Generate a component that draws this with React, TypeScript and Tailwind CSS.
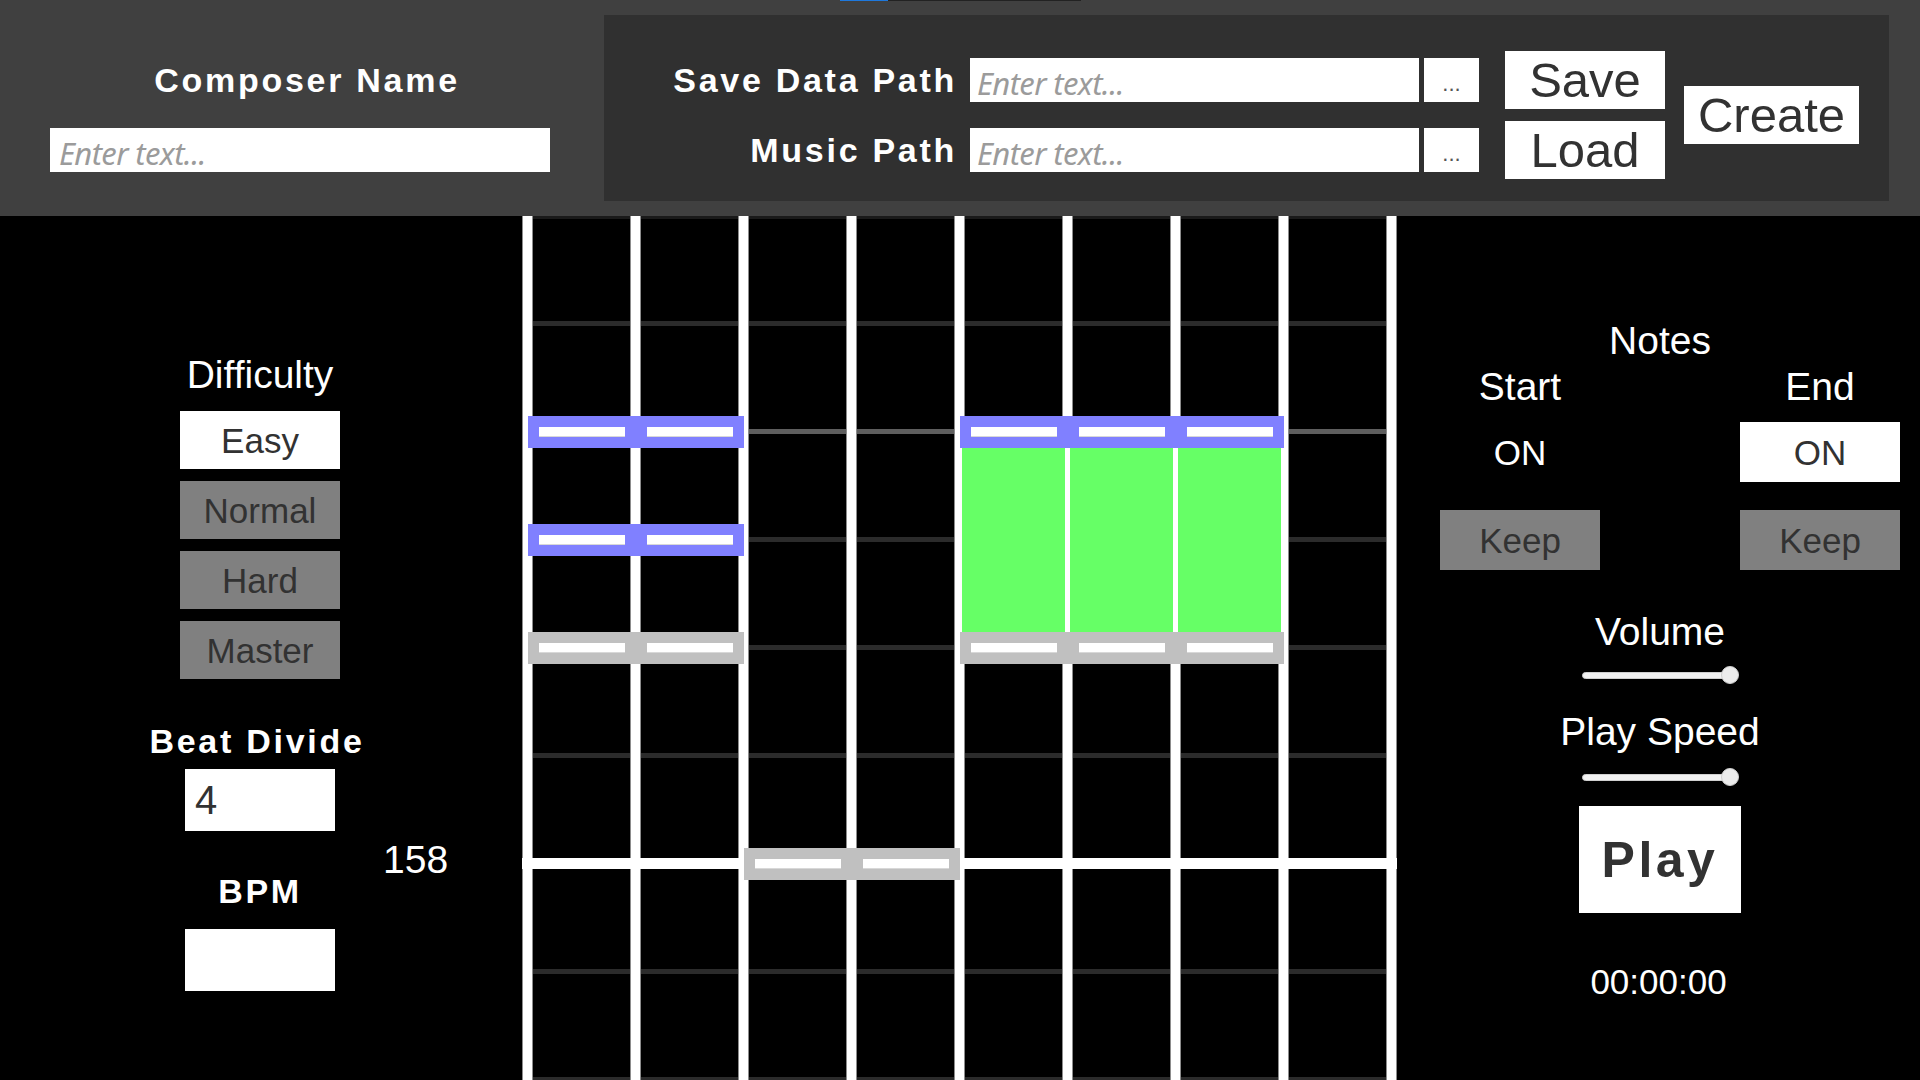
import React from 'react';

const LANE = 108;
const verticals = [0, 1, 2, 3, 4, 5, 6, 7, 8];
const rows = [0, 1, 2, 3, 4, 5, 6, 7];

// note rows: center y (relative to chart top), colour, lanes
const noteRows = [
  { cy: 216, color: '#8080ff', lanes: [0, 1, 4, 5, 6] },
  { cy: 324, color: '#8080ff', lanes: [0, 1] },
  { cy: 432, color: '#c0c0c0', lanes: [0, 1, 4, 5, 6] },
  { cy: 648, color: '#c0c0c0', lanes: [2, 3] },
];

const longLanes = [4, 5, 6];
const difficulties = ['Easy', 'Normal', 'Hard', 'Master'];

function NoteChart() {
  return (
    <svg width="875" height="864" viewBox="0 0 875 864" className="block">
      <rect x="0" y="0" width="875" height="3" fill="#1a1a1a" />
      {rows.map((j) =>
        j === 5 ? null : (
          <rect
            key={j}
            x="0"
            y={105 + LANE * j}
            width="875"
            height="5"
            fill={j === 1 ? '#5e5e5e' : '#2b2b2b'}
          />
        )
      )}
      {verticals.map((k) => (
        <g key={k}>
          <rect x={LANE * k} y="0" width="11" height="864" fill="#8c8c8c" />
          <rect x={LANE * k + 1} y="0" width="9" height="864" fill="#ffffff" />
        </g>
      ))}
      {/* measure line */}
      <rect x="0" y="642" width="875" height="11" fill="#ffffff" />
      {longLanes.map((k) => (
        <rect key={k} x={8 + LANE * k} y="232" width="103" height="184" fill="#66ff66" />
      ))}
      {noteRows.map((row) =>
        row.lanes.map((k) => {
          const x = 6 + LANE * k;
          const y = row.cy - 16;
          return (
            <g key={`${row.cy}-${k}`}>
              <rect x={x} y={y} width="108" height="32" fill={row.color} />
              <rect x={x + 11} y={y + 11} width="86" height="10" fill="#ffffff" />
              <rect x={x + 11} y={y + 20} width="86" height="1" fill="#d8d8d8" />
            </g>
          );
        })
      )}
    </svg>
  );
}

function Slider() {
  return (
    <div className="flex justify-center pl-[3px]">
      <div className="relative h-[18px] w-[157px] flex items-center">
        <div className="h-[7px] w-[150px] rounded-full bg-[#f2f2f2] border border-[#d0d0d0]" />
        <div className="absolute right-0 top-0 h-[18px] w-[18px] rounded-full bg-[#ececec] border border-[#cfcfcf]" />
      </div>
    </div>
  );
}

function Placeholder() {
  return (
    <span className="font-['Noto_Sans',sans-serif] italic text-[31px] leading-none text-[#9b9b9b] tracking-[-0.02em] whitespace-nowrap">
      Enter text...
    </span>
  );
}

function PathRow({ label }: { label: string }) {
  return (
    <div className="flex items-center h-[44px]">
      <div className="w-[353px] whitespace-nowrap text-right text-[34px] leading-none font-bold tracking-[0.08em] text-white">
        {label}
      </div>
      <div className="ml-[13px] flex h-[44px] w-[449px] items-start bg-white pl-[7px] pt-[10px]">
        <Placeholder />
      </div>
      <div className="ml-[5px] h-[44px] w-[55px] bg-white flex items-center justify-center pt-[8px] text-[22px] leading-none text-[#555555]">
        ...
      </div>
    </div>
  );
}

export default function App() {
  return (
    <div className="w-[1920px] h-[1080px] overflow-hidden bg-black font-['Liberation_Sans',Arial,sans-serif]">
      {/* Header */}
      <header className="relative flex h-[216px] bg-[#404040]">
        <div className="absolute left-[840px] top-0 flex h-[1px] w-[241px] bg-[#222222]">
          <div className="h-full w-[48px] bg-[#1e78dc]" />
        </div>

        <div className="w-[604px] shrink-0 pt-[63px] pl-[50px]">
          <div className="w-[500px] pl-[14px] whitespace-nowrap text-center text-[34px] leading-none font-bold tracking-[0.08em] text-white">
            Composer Name
          </div>
          <div className="mt-[31px] flex h-[44px] w-[500px] items-start bg-white pl-[9px] pt-[10px]">
            <Placeholder />
          </div>
        </div>

        <div className="mt-[15px] flex h-[186px] w-[1285px] items-center bg-[#303030] pt-[14px]">
          <div className="flex flex-col gap-[26px]">
            <PathRow label="Save Data Path" />
            <PathRow label="Music Path" />
          </div>
          <div className="ml-[26px] flex flex-col gap-[12px]">
            <button className="flex h-[58px] w-[160px] items-center justify-center bg-white text-[49px] leading-none text-[#323232]">
              Save
            </button>
            <button className="flex h-[58px] w-[160px] items-center justify-center bg-white text-[49px] leading-none text-[#323232]">
              Load
            </button>
          </div>
          <button className="ml-[19px] flex h-[58px] w-[175px] items-center justify-center bg-white text-[49px] leading-none text-[#323232]">
            Create
          </button>
        </div>
      </header>

      {/* Body */}
      <div className="flex h-[864px]">
        {/* Left settings */}
        <aside className="w-[522px] shrink-0 pt-[139px]">
          <div className="flex w-[520px] flex-col items-center">
            <div className="text-[39px] leading-none text-white">Difficulty</div>
            <div className="mt-[17px] flex flex-col gap-[12px]">
              {difficulties.map((d, i) => (
                <div
                  key={d}
                  className={`flex h-[58px] w-[160px] items-center justify-center text-[35px] leading-none text-[#323232] ${
                    i === 0 ? 'bg-white' : 'bg-[#808080]'
                  }`}
                >
                  {d}
                </div>
              ))}
            </div>
          </div>

          <div className="ml-[150px] mt-[45px] flex">
            <div className="flex w-[220px] flex-col items-center">
              <div className="whitespace-nowrap pr-[6px] text-[34px] leading-none font-bold tracking-[0.08em] text-white">
                Beat Divide
              </div>
              <div className="mt-[11px] flex h-[62px] w-[150px] items-center bg-white pl-[10px] text-[40px] leading-none text-[#323232]">
                4
              </div>
              <div className="mt-[43px] text-[34px] leading-none font-bold tracking-[0.08em] text-white">
                BPM
              </div>
              <div className="mt-[21px] h-[62px] w-[150px] bg-white" />
            </div>
            <div className="ml-[13px] mt-[116px] text-[39px] leading-none text-white">158</div>
          </div>
        </aside>

        {/* Chart */}
        <div className="w-[875px] shrink-0">
          <NoteChart />
        </div>

        {/* Right controls */}
        <aside className="flex flex-1 flex-col pt-[105px]">
          <div className="pl-[3px] text-center text-[39px] leading-none text-white">Notes</div>
          <div className="mt-[7px] flex gap-[140px] pl-[43px]">
            <div className="w-[160px] text-center text-[39px] leading-none text-white">Start</div>
            <div className="w-[160px] text-center text-[39px] leading-none text-white">End</div>
          </div>
          <div className="mt-[16px] flex gap-[140px] pl-[43px]">
            <div className="flex h-[60px] w-[160px] items-center justify-center text-[35px] leading-none text-white">
              ON
            </div>
            <div className="flex h-[60px] w-[160px] items-center justify-center bg-white text-[35px] leading-none text-[#323232]">
              ON
            </div>
          </div>
          <div className="mt-[28px] flex gap-[140px] pl-[43px]">
            <div className="flex h-[60px] w-[160px] items-center justify-center bg-[#808080] text-[35px] leading-none text-[#323232]">
              Keep
            </div>
            <div className="flex h-[60px] w-[160px] items-center justify-center bg-[#808080] text-[35px] leading-none text-[#323232]">
              Keep
            </div>
          </div>

          <div className="mt-[42px] pl-[3px] text-center text-[39px] leading-none text-white">Volume</div>
          <div className="mt-[15px]">
            <Slider />
          </div>
          <div className="mt-[28px] pl-[3px] text-center text-[39px] leading-none text-white">Play Speed</div>
          <div className="mt-[17px]">
            <Slider />
          </div>
          <div className="mt-[20px] flex justify-center pl-[3px]">
            <button className="flex h-[107px] w-[162px] items-center justify-center bg-white text-[50px] leading-none font-bold tracking-[0.07em] text-[#323232]">
              Play
            </button>
          </div>
          <div className="mt-[51px] text-center text-[35px] leading-none text-white">00:00:00</div>
        </aside>
      </div>
    </div>
  );
}
